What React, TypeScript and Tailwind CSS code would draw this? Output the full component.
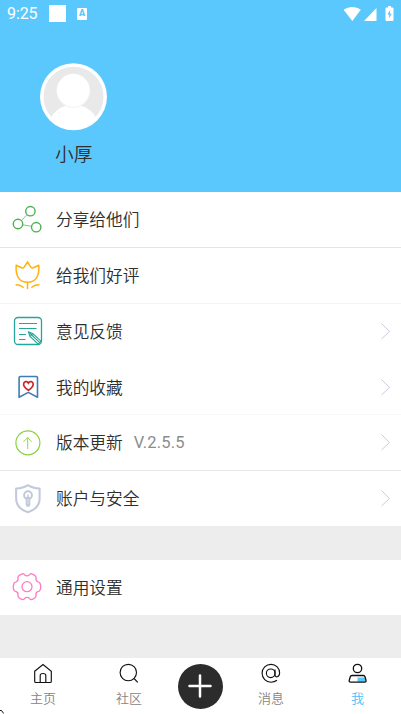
import type { ReactNode } from 'react';
import { clsx } from 'clsx';

const ShareIcon = () => (
  <g stroke="#4caf50" strokeWidth="1.4">
    <circle cx="18.4" cy="7.2" r="4.7" />
    <circle cx="6" cy="20" r="4.7" />
    <circle cx="24.2" cy="23.2" r="4.7" />
    <path d="M9.4 16.6 15 10.7M10.7 20.8l8.9 1.5" strokeWidth=".7" />
  </g>
);

const TulipIcon = () => (
  <g stroke="#ffb30f" strokeWidth="1.5" strokeLinejoin="round">
    <path d="M4.200 5.300l6 2.700q1.300.2 2-.9l3.300-5.300 3.300 5.300q.7 1.100 2 .9l6-2.700c.8 10.200-2.800 17-11.300 17S3.400 15.500 4.200 5.300z" />
    <path d="M15.500 23v6M3.600 24.700c3.200 0 6 .8 8 3.100M27.400 24.700c-3.200 0-6 .8-8 3.100" />
  </g>
);

const FeedbackIcon = () => (
  <g stroke="#26a69a" strokeWidth="1.1">
    <rect x="2.500" y="1.500" width="27" height="27" rx="3.500" strokeWidth="1.300" />
    <path d="M7 7.500h18M7 12.500h17.500M7 18.500h7M7 23.500h6.500" />
    <path d="m16.500 16 1.300 4.200 8.400 8 2.800-3-8.300-7.700z" fill="#fff" />
    <path d="m17 16.500 10.800 10.200M18.300 20.300l2.200-2.600M19 18l2 2" />
  </g>
);

const FavoriteIcon = () => (
  <>
    <path d="M8.300 4.500h16c.8 0 1.200.4 1.200 1.200v19.600l-9.200-4.900-9.200 4.900V5.700c0-.8.400-1.200 1.200-1.200z" stroke="#3f7cb5" strokeWidth="1.600" strokeLinejoin="round" />
    <path d="M16.400 18.200c-2.900-2-4.800-3.700-4.800-5.800 0-3.100 3.400-3.700 4.800-1.400 1.400-2.300 4.800-1.700 4.800 1.400 0 2.100-1.900 3.800-4.800 5.800z" stroke="#cf2426" strokeWidth="1.700" />
  </>
);

const UpdateIcon = () => (
  <g stroke="#8bd03f">
    <circle cx="15.900" cy="15.800" r="12" strokeWidth="1.200" />
    <path d="M15.700 22V10.700M11.500 14.800l4.200-4.300 4.200 4.300" strokeWidth=".9" />
  </g>
);

const SecurityIcon = () => (
  <g stroke="#c2c9da" strokeWidth="2" strokeLinejoin="round">
    <path d="M16 2.200c2.800 1.900 6.200 3.200 11.400 3.400v10.200c0 6-4 10.900-11.400 13.500C8.600 26.700 4.600 21.800 4.600 15.800V5.600C9.800 5.400 13.200 4.100 16 2.200z" transform="translate(-.6 0) scale(1.030 1)" />
    <circle cx="16" cy="12.200" r="3.900" />
    <path d="M16 15.800v5.800" strokeWidth="4.600" strokeLinecap="round" />
    <path d="M16 12v1.500" strokeWidth="1.500" strokeLinecap="round" />
    <path d="M16 16v5" stroke="#fff" strokeWidth=".5" />
  </g>
);

// six rounded teeth around the hub
const SettingsIcon = () => (
  <g stroke="#ff7cc5" strokeWidth="1.300" strokeLinejoin="round">
    <path d="M10.800 1.700 8.600 2.600Q5.600 4 5.900 6.300 6.700 8.700 4.200 9.800C1.900 10 1.300 12.500 1.300 14.700s.6 4.700 2.900 4.900q2.500 1.100 1.700 3.500-.3 2.300 2.700 3.700l2.200.9q1.400-.2 1.900-1.400 2.300-1.700 4.600 0 .5 1.200 1.900 1.400l2.200-.9q3-1.400 2.700-3.700-.8-2.400 1.700-3.500c2.300-.2 2.900-2.700 2.900-4.900s-.6-4.700-2.900-4.900q-2.500-1.100-1.700-3.500.3-2.300-2.700-3.700l-2.200-.9q-1.400.2-1.900 1.400-2.300 1.700-4.600 0-.5-1.200-1.900-1.400z" />
    <circle cx="15" cy="14.700" r="5" />
  </g>
);

const ChevronIcon = () => (
  <svg className="mt-[18px] mr-2.5 h-[18px] w-[11px] shrink-0 self-start" viewBox="0 0 11 18" fill="none" stroke="#cbcddc">
    <path d="m1.500 1.500 8 8-8 7.500" />
  </svg>
);

type RowProps = {
  label: string;
  icon: ReactNode;
  extra?: string;
  arrow?: boolean;
  className?: string;
};

function Row({ label, icon, extra, arrow, className }: RowProps) {
  return (
    <div className={clsx('flex items-center bg-white pl-3', className)}>
      <svg className="mt-3 h-[31px] w-8 shrink-0 self-start" viewBox="0 0 32 31" fill="none">
        {icon}
      </svg>
      <span className="mb-px ml-3 text-[16.7px] leading-6 font-[350] text-[#2e2e2e]">{label}</span>
      {extra && <span className="mt-px ml-[11px] font-[Roboto] text-[16.500px] leading-6 tracking-[0.200px] text-[#8c8c8c]">{extra}</span>}
      <span className="flex-1" />
      {arrow && <ChevronIcon />}
    </div>
  );
}

const rows: RowProps[] = [
  { label: '分享给他们', icon: <ShareIcon />, className: 'h-14 border-b border-[#e4e4e4] pb-px' },
  { label: '给我们好评', icon: <TulipIcon />, className: 'h-14 border-b border-[#f3f3f3] pb-px' },
  { label: '意见反馈', icon: <FeedbackIcon />, arrow: true, className: 'h-14 border-b border-white pb-px' },
  { label: '我的收藏', icon: <FavoriteIcon />, arrow: true, className: 'h-[55px] border-b border-[#f8f8f8]' },
  { label: '版本更新', icon: <UpdateIcon />, extra: 'V.2.5.5', arrow: true, className: 'h-14 border-b border-[#e8e8e8]' },
  { label: '账户与安全', icon: <SecurityIcon />, arrow: true, className: 'h-[55px]' },
];

function StatusBar() {
  return (
    <div className="flex h-[27px] items-center pl-[7px] text-white">
      <span className="w-[42px] pt-px font-[Roboto] text-[16px] leading-none tracking-[-0.100px]">9:25</span>
      <span className="h-[17px] w-[17px] bg-white" />
      <span className="ml-[11px] flex h-3 w-2.5 items-center justify-center rounded-[1px] bg-white font-[Roboto] text-[9px] leading-none font-black text-[#5ac8fc]">
        A
      </span>
      <svg className="ml-auto h-[17px] w-[57px]" viewBox="344 4 57 17" fill="#fff">
        <path d="M343.700 8.800c5.300-3.700 11.800-3.700 17.100 0L352.300 20z" />
        <path d="M376.500 7v13H364z" />
        <path d="M388 5h3v1.500h1.500q1 0 1 1V19q0 1-1 1h-6q-1 0-1-1V7.500q0-1 1-1h1.500z" />
        <path d="m390.200 9-2.800 4.500h1.800v4l2.500-4.700h-1.800z" fill="#5ac8fc" />
      </svg>
    </div>
  );
}

function Avatar() {
  return (
    <svg className="mt-9 ml-[39px] h-[68px] w-[68px]" viewBox="0 0 68 68">
      <defs>
        <clipPath id="avatar">
          <circle cx="34.500" cy="33.800" r="32.500" />
        </clipPath>
      </defs>
      <circle cx="34.500" cy="33.800" r="33.500" fill="#fff" />
      <circle cx="34.500" cy="33.800" r="30" fill="#e9e9e9" />
      <g clipPath="url(#avatar)">
        <path d="M11 57c3.500-9 12-15.200 23.500-15.200S54.500 48 58 57l-4 11H15z" fill="#fff" />
      </g>
      <circle cx="34.300" cy="28" r="16.800" fill="#f2f2f4" />
      <circle cx="34.300" cy="27.300" r="16.500" fill="#fff" />
    </svg>
  );
}

type TabProps = { label: string; active?: boolean; className: string; children: ReactNode };

function Tab({ label, active, className, children }: TabProps) {
  return (
    <div className={clsx('flex flex-col items-center pt-[5px]', className)}>
      <svg className="h-[21px] w-5" viewBox="0 0 20 21" fill="none" stroke="#111" strokeWidth="1.150">
        {children}
      </svg>
      <span className={clsx('mt-1 text-[13px] leading-5 font-[350]', active ? 'text-[#4fc0f8]' : 'text-[#858585]')}>{label}</span>
    </div>
  );
}

export default function App() {
  return (
    <div className="relative flex h-[714px] w-[401px] flex-col overflow-hidden bg-[#ededed] font-['Noto_Sans_CJK_SC',sans-serif]">
      <header className="h-48 bg-[#5ac8fc]">
        <StatusBar />
        <Avatar />
        <div className="mt-2 ml-[55px] text-[18.700px] leading-7 font-[350] text-[#2e2e2e]">小厚</div>
      </header>

      <main className="flex-1">
        {rows.map((row) => (
          <Row key={row.label} {...row} />
        ))}
        <Row label="通用设置" icon={<SettingsIcon />} className="mt-[34px] h-[55px]" />
      </main>

      <nav className="flex h-14 bg-white">
        <Tab label="主页" className="w-[86px]">
          <path d="M1.700 8.200 10 1.500l8.300 6.700v10.300q0 1-1 1H2.700q-1 0-1-1zM7.200 19.500v-7q0-2 2.800-2t2.800 2v7" />
        </Tab>
        <Tab label="社区" className="w-[86px]">
          <circle cx="9.300" cy="9.500" r="8.200" />
          <path d="m15 15.500 3.800 3.800" />
        </Tab>
        <div className="flex w-14 justify-center pt-[5.5px]">
          <div className="flex h-[45px] w-[45px] items-center justify-center rounded-full bg-[#2c2c2c]">
            <svg className="h-6 w-6" viewBox="0 0 24 24" stroke="#fff" strokeWidth="2.500" strokeLinecap="round">
              <path d="M12 1.500v21M1.500 12h21" />
            </svg>
          </div>
        </div>
        <Tab label="消息" className="w-[86px]">
          <circle cx="9.700" cy="10.300" r="4.300" />
          <path d="M14 6.500v5.600c0 2.800 4.600 2.400 4.600-2C18.600 5.200 15 1.300 10 1.300s-8.900 4-8.900 9 3.900 8.900 8.900 8.900c2.500 0 4.300-.6 6-1.900" />
        </Tab>
        <Tab label="我" active className="w-[87px]">
          <circle cx="9.500" cy="5.500" r="4.200" strokeWidth="1.300" />
          <path d="M9.500 14.500h7.800v4.300H9.500z" fill="#5ac8fc" stroke="none" />
          <path d="M4 12.500h11.200q1.500 0 1.900 1.500l.9 3.500q.4 1.600-1.200 1.600H2.500q-1.600 0-1.300-1.600L2.200 14q.4-1.500 1.800-1.500z" strokeWidth="1.300" />
        </Tab>
      </nav>

      <svg className="absolute bottom-0 left-0 h-1 w-1" viewBox="0 0 4 4" stroke="#111" fill="none">
        <path d="M0 .5h1.500L3.700 3.500" />
      </svg>
    </div>
  );
}
